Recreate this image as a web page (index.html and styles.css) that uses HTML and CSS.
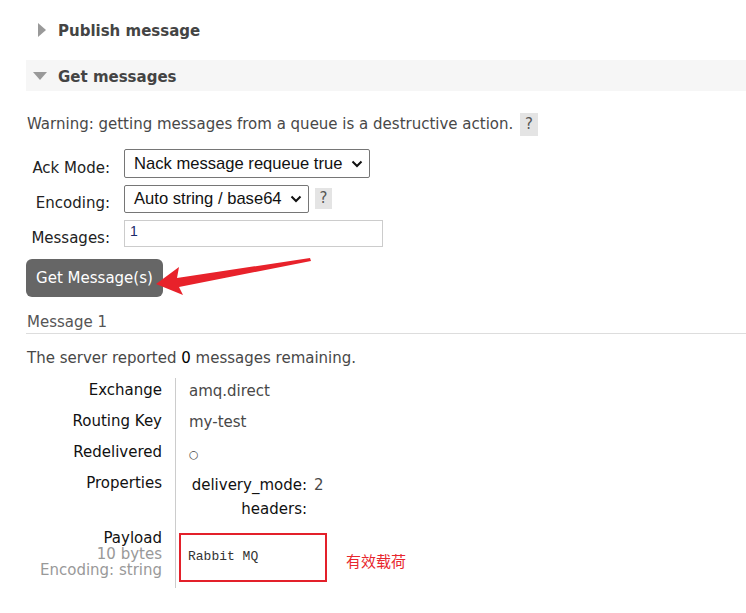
FILE: index.html
```html
<!DOCTYPE html>
<html>
<head>
<meta charset="utf-8">
<link rel="stylesheet" href="styles.css">
</head>
<body>
<div class="page">
  <div class="section-head">
    <span class="tri-right"></span>
    <span class="head-title">Publish message</span>
  </div>
  <div class="section-head open">
    <span class="tri-down"></span>
    <span class="head-title">Get messages</span>
  </div>

  <p class="warning">Warning: getting messages from a queue is a destructive action. <span class="help">?</span></p>

  <div class="form">
    <label class="flabel">Ack Mode:</label>
    <div class="fctl">
      <div class="select sel-ack">Nack message requeue true<span class="chev"><svg width="12" height="8" viewBox="0 0 12 8"><path d="M1.5 1.5 L6 6 L10.5 1.5" fill="none" stroke="#111" stroke-width="2"/></svg></span></div>
    </div>
    <label class="flabel">Encoding:</label>
    <div class="fctl">
      <div class="select sel-enc">Auto string / base64<span class="chev"><svg width="12" height="8" viewBox="0 0 12 8"><path d="M1.5 1.5 L6 6 L10.5 1.5" fill="none" stroke="#111" stroke-width="2"/></svg></span></div>
      <span class="help help-sm">?</span>
    </div>
    <label class="flabel">Messages:</label>
    <div class="fctl">
      <div class="input">1</div>
    </div>
  </div>

  <div class="btn-row">
    <button class="btn">Get Message(s)</button>
  </div>

  <h3 class="msg-title">Message 1</h3>
  <p class="remaining">The server reported <b>0</b> messages remaining.</p>

  <table class="details">
    <tr><th>Exchange</th><td>amq.direct</td></tr>
    <tr><th>Routing Key</th><td>my-test</td></tr>
    <tr><th>Redelivered</th><td><span class="circ">○</span></td></tr>
    <tr class="props"><th>Properties</th><td>
      <table class="inner">
        <tr><th>delivery_mode:</th><td>2</td></tr>
        <tr><th>headers:</th><td></td></tr>
      </table>
    </td></tr>
    <tr class="payload"><th>Payload<span class="sub">10 bytes</span><span class="sub">Encoding: string</span></th><td>
      <div class="pay-row">
        <div class="pay-box"><pre>Rabbit MQ</pre></div>
        <span class="note">有效载荷</span>
      </div>
    </td></tr>
    <tr class="tail"><th></th><td></td></tr>
  </table>
</div>

<svg class="arrow" width="746" height="613" viewBox="0 0 746 613">
  <polygon points="156,284 179,267 177,278 310,258 311,261 179,287 183,295" fill="#e8222b"/>
</svg>
</body>
</html>
```

FILE: styles.css
```css
html, body {
  margin: 0;
  padding: 0;
  background: #fff;
}
body {
  font-family: "DejaVu Sans", Verdana, sans-serif;
  font-size: 15px;
  color: #484848;
  position: relative;
  width: 746px;
  height: 613px;
  overflow: hidden;
}
.page {
  padding: 14px 0 0 26px;
}
.section-head {
  box-sizing: border-box;
  height: 31px;
  display: flex;
  align-items: center;
  padding-left: 12px;
  padding-top: 2px;
  margin-bottom: 15px;
}
.section-head.open {
  background: #f6f6f6;
  padding-left: 7px;
  margin-bottom: 0;
}
.tri-right {
  width: 0;
  height: 0;
  border-top: 7px solid transparent;
  border-bottom: 7px solid transparent;
  border-left: 8px solid #999;
  margin-right: 12px;
  margin-top: -2px;
}
.tri-down {
  width: 0;
  height: 0;
  border-left: 7px solid transparent;
  border-right: 7px solid transparent;
  border-top: 8px solid #999;
  margin-right: 11px;
  margin-top: -1px;
}
.head-title {
  font-weight: bold;
  font-size: 15px;
  color: #444;
}
.warning {
  margin: 22px 0 0 1px;
  line-height: 23px;
}
.help {
  display: inline-block;
  background: #e4e4e4;
  width: 18px;
  height: 23px;
  line-height: 23px;
  text-align: center;
  color: #555;
  margin-left: 2px;
}
.help-sm {
  width: 17px;
  height: 21px;
  line-height: 21px;
  margin-left: 6px;
}
.form {
  display: grid;
  grid-template-columns: 84px auto;
  column-gap: 14px;
  row-gap: 6px;
  margin-top: 13px;
}
.flabel {
  text-align: right;
  color: #222;
  padding-top: 9px;
  line-height: 20px;
}
.fctl {
  display: flex;
  align-items: center;
  height: 29px;
}
.select {
  box-sizing: border-box;
  border: 1px solid #767676;
  border-radius: 2px;
  height: 29px;
  display: flex;
  align-items: center;
  padding-left: 9px;
  font-family: "Liberation Sans", Arial, sans-serif;
  font-size: 16.6px;
  color: #111;
  background: #fff;
}
.sel-ack { width: 246px; }
.sel-enc { width: 185px; height: 28px; }
.chev {
  margin-left: auto;
  margin-right: 6px;
  display: flex;
}
.input {
  box-sizing: border-box;
  width: 259px;
  height: 27px;
  border: 1px solid #ccc;
  padding: 2px 5px;
  font-family: "Liberation Sans", Arial, sans-serif;
  font-size: 14px;
  color: #1a2a6a;
}
.btn-row {
  margin-top: 11px;
}
.btn {
  width: 137px;
  height: 38px;
  background: #666;
  color: #fff;
  border: none;
  border-radius: 6px;
  font-family: "DejaVu Sans", Verdana, sans-serif;
  font-size: 15px;
  padding: 0;
}
.msg-title {
  font-weight: normal;
  font-size: 15px;
  color: #555;
  margin: 16px 0 0 0;
  padding: 0 0 2px 1px;
  border-bottom: 1px solid #ddd;
}
.remaining {
  margin: 15px 0 0 1px;
}
.remaining b {
  font-weight: normal;
  color: #000;
}
.details {
  border-collapse: collapse;
  margin-top: 11px;
}
.details > tbody > tr > th {
  text-align: right;
  font-weight: normal;
  color: #111;
  width: 136px;
  padding: 2px 13px 9px 0;
  vertical-align: top;
  line-height: 20px;
  border-right: 1px solid #ccc;
}
.details > tbody > tr > td {
  padding: 3px 0 8px 13px;
  vertical-align: top;
  line-height: 20px;
}
.circ {
  font-size: 11px;
  line-height: 10px;
}
.details > tbody > tr.props > td {
  padding-bottom: 0;
}
.inner {
  border-collapse: collapse;
  margin-left: 2px;
}
.inner th {
  text-align: right;
  font-weight: normal;
  color: #111;
  padding: 0 7px 4px 0;
  line-height: 20px;
  width: 116px;
}
.inner td {
  padding: 1px 0 4px 0;
  line-height: 20px;
}
.inner tr:last-child th,
.inner tr:last-child td {
  padding-bottom: 0;
}
.details > tbody > tr.payload > th {
  padding-top: 11px;
  line-height: 16px;
  padding-bottom: 0;
}
.sub {
  display: block;
  color: #999;
  line-height: 16px;
}
.details > tbody > tr.payload > td {
  padding: 14px 0 0 3px;
}
.pay-row {
  display: flex;
  align-items: flex-start;
}
.pay-box {
  box-sizing: border-box;
  width: 148px;
  height: 49px;
  border: 2px solid #e3202a;
  padding: 12px 0 0 7px;
}
.pay-box pre {
  margin: 0;
  font-family: "Liberation Mono", "Courier New", monospace;
  font-size: 13px;
  color: #333;
}
.note {
  margin: 18px 0 0 19px;
  color: #e8272e;
  font-family: "Noto Sans CJK SC", sans-serif;
  font-size: 15px;
}
.details > tbody > tr.tail > th,
.details > tbody > tr.tail > td {
  height: 6px;
  padding: 0;
}
.arrow {
  position: absolute;
  left: 0;
  top: 0;
  pointer-events: none;
}
```
